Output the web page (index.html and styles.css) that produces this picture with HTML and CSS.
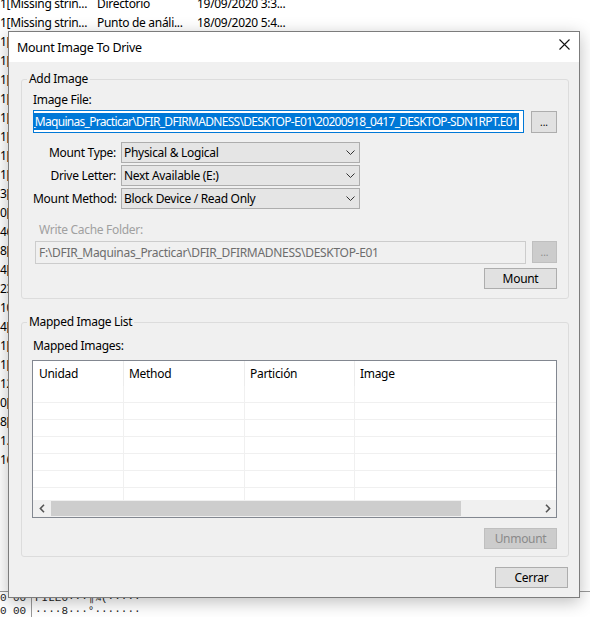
FILE: index.html
```html
<!DOCTYPE html>
<html lang="es">
<head>
<meta charset="utf-8">
<title>Mount Image To Drive</title>
<link rel="stylesheet" href="styles.css">
</head>
<body>
<div class="desk">
  <div class="list">
    <div class="row"><span class="c1">1[Missing strin...</span><span class="c2">Directorio</span><span class="c3">19/09/2020 3:3...</span></div>
    <div class="row"><span class="c1">1[Missing strin...</span><span class="c2">Punto de análi...</span><span class="c3">18/09/2020 5:4...</span></div>
    <div class="row"><span class="c1">1[</span></div>
    <div class="row"><span class="c1">1[</span></div>
    <div class="row"><span class="c1">1[</span></div>
    <div class="row"><span class="c1">1[</span></div>
    <div class="row"><span class="c1">1[</span></div>
    <div class="row"><span class="c1">1[</span></div>
    <div class="row"><span class="c1">1[</span></div>
    <div class="row"><span class="c1">1[</span></div>
    <div class="row"><span class="c1">3[</span></div>
    <div class="row"><span class="c1">0[</span></div>
    <div class="row"><span class="c1">46</span></div>
    <div class="row"><span class="c1">8[</span></div>
    <div class="row"><span class="c1">4[</span></div>
    <div class="row"><span class="c1">23</span></div>
    <div class="row"><span class="c1">10</span></div>
    <div class="row"><span class="c1">4[</span></div>
    <div class="row"><span class="c1">1[</span></div>
    <div class="row"><span class="c1">1[</span></div>
    <div class="row"><span class="c1">12</span></div>
    <div class="row"><span class="c1">0[</span></div>
    <div class="row"><span class="c1">8[</span></div>
    <div class="row"><span class="c1">1.</span></div>
    <div class="row"><span class="c1">16</span></div>
  </div>
  <div class="hex">
    <div class="hexrow"><span class="off">0</span><span class="hb">00</span><span class="asc">FILE0···¶¾(·····</span></div>
    <div class="hexrow"><span class="off">0</span><span class="hb">00</span><span class="asc">····8···°·······</span></div>
  </div>
</div>

<div class="dialog">
  <div class="titlebar">
    <span class="title">Mount Image To Drive</span>
    <svg class="close" width="11" height="11" viewBox="0 0 11 11"><path d="M0.5 0.5L10.5 10.5M10.5 0.5L0.5 10.5" stroke="#111" stroke-width="1.1" fill="none"/></svg>
  </div>
  <div class="dbody">
    <fieldset class="group g1">
      <legend>Add Image</legend>
      <div class="lbl">Image File:</div>
      <div class="filerow">
        <div class="textbox focus"><span class="sel">_Maquinas_Practicar\DFIR_DFIRMADNESS\DESKTOP-E01\20200918_0417_DESKTOP-SDN1RPT.E01</span></div>
        <button class="btn dots">...</button>
      </div>
      <div class="opts">
        <span class="olbl">Mount Type:</span>
        <div class="combo"><span>Physical &amp; Logical</span><svg width="9" height="5" viewBox="0 0 9 5"><path d="M0.5 0.5L4.5 4.5L8.5 0.5" stroke="#333" fill="none"/></svg></div>
        <span class="olbl">Drive Letter:</span>
        <div class="combo"><span>Next Available (E:)</span><svg width="9" height="5" viewBox="0 0 9 5"><path d="M0.5 0.5L4.5 4.5L8.5 0.5" stroke="#333" fill="none"/></svg></div>
        <span class="olbl">Mount Method:</span>
        <div class="combo"><span>Block Device / Read Only</span><svg width="9" height="5" viewBox="0 0 9 5"><path d="M0.5 0.5L4.5 4.5L8.5 0.5" stroke="#333" fill="none"/></svg></div>
      </div>
      <div class="lbl dis-lbl">Write Cache Folder:</div>
      <div class="filerow dis-row">
        <div class="textbox disabled">F:\DFIR_Maquinas_Practicar\DFIR_DFIRMADNESS\DESKTOP-E01</div>
        <button class="btn dots off-btn">...</button>
      </div>
      <div class="actions a1"><button class="btn">Mount</button></div>
    </fieldset>

    <fieldset class="group g2">
      <legend>Mapped Image List</legend>
      <div class="lbl">Mapped Images:</div>
      <div class="lv">
        <div class="lv-head">
          <div class="col w1">Unidad</div>
          <div class="col w2">Method</div>
          <div class="col w3">Partición</div>
          <div class="col w4">Image</div>
        </div>
        <div class="lv-body">
          <div class="lv-row"><div class="cell w1"></div><div class="cell w2"></div><div class="cell w3"></div><div class="cell w4"></div></div>
          <div class="lv-row"><div class="cell w1"></div><div class="cell w2"></div><div class="cell w3"></div><div class="cell w4"></div></div>
          <div class="lv-row"><div class="cell w1"></div><div class="cell w2"></div><div class="cell w3"></div><div class="cell w4"></div></div>
          <div class="lv-row"><div class="cell w1"></div><div class="cell w2"></div><div class="cell w3"></div><div class="cell w4"></div></div>
          <div class="lv-row"><div class="cell w1"></div><div class="cell w2"></div><div class="cell w3"></div><div class="cell w4"></div></div>
          <div class="lv-row"><div class="cell w1"></div><div class="cell w2"></div><div class="cell w3"></div><div class="cell w4"></div></div>
          <div class="lv-row"><div class="cell w1"></div><div class="cell w2"></div><div class="cell w3"></div><div class="cell w4"></div></div>
        </div>
        <div class="hscroll">
          <span class="arrow"><svg width="6" height="9" viewBox="0 0 6 9"><path d="M5 0.8L1.4 4.5L5 8.2" stroke="#555" stroke-width="1.6" fill="none"/></svg></span>
          <div class="thumb"></div>
          <span class="arrow right"><svg width="6" height="9" viewBox="0 0 6 9"><path d="M1 0.8L4.6 4.5L1 8.2" stroke="#555" stroke-width="1.6" fill="none"/></svg></span>
        </div>
      </div>
      <div class="actions a2"><button class="btn off-btn">Unmount</button></div>
    </fieldset>

    <div class="footer"><button class="btn">Cerrar</button></div>
  </div>
</div>
</body>
</html>
```

FILE: styles.css
```css
* { box-sizing: border-box; }
html, body { margin: 0; padding: 0; }
body {
  width: 590px;
  height: 617px;
  overflow: hidden;
  position: relative;
  background: #ffffff;
  font-family: "Noto Sans", "Segoe UI", sans-serif;
  font-size: 12px;
  letter-spacing: -0.3px;
  color: #000;
}

/* background application */
.desk { height: 617px; display: flex; flex-direction: column; }
.list { margin-top: -6px; }
.row { height: 19px; line-height: 19px; display: flex; white-space: nowrap; }
.c1 { width: 97px; overflow: hidden; }
.c2 { width: 100px; overflow: hidden; }
.c3 { width: 120px; overflow: hidden; }

.hex {
  margin-top: auto;
  margin-bottom: -1px;
  border-top: 1px solid #9a9a9a;
  font-family: "Liberation Mono", monospace;
  font-size: 11px;
  letter-spacing: 0;
  color: #222;
}
.hexrow { height: 13px; line-height: 13px; display: flex; white-space: nowrap; }
.off { width: 13px; }
.hb { width: 19px; border-right: 1px solid #9a9a9a; }
.asc { padding-left: 3px; }

/* dialog */
.dialog {
  position: absolute;
  left: 8px;
  top: 31px;
  width: 572px;
  height: 567px;
  border: 1px solid #7c7c7c;
  background: #f0f0f0;
  box-shadow: 0 4px 16px rgba(0, 0, 0, 0.26);
  display: flex;
  flex-direction: column;
}
.titlebar {
  height: 30px;
  flex-shrink: 0;
  background: #fff;
  display: flex;
  align-items: center;
  padding-left: 8px;
}
.title { font-size: 12.5px; }
.close { margin-left: auto; margin-right: 9px; align-self: flex-start; margin-top: 7px; }

.dbody {
  flex: 1;
  padding: 9px 10px 0 12px;
  display: flex;
  flex-direction: column;
}

.group {
  margin: 0;
  min-width: 0;
  border: 1px solid #dcdcdc;
  border-radius: 3px;
}
.group legend {
  padding: 0 2px;
  margin-left: -6px;
  height: 16px;
  line-height: 16px;
}
.g1 { padding: 5px 11px 9px; }
.g2 { padding: 8px 11px 7px; margin-top: 15px; }

.lbl { height: 16px; line-height: 16px; white-space: nowrap; }

.filerow { display: flex; align-items: flex-start; margin-top: 2px; }
.textbox {
  width: 491px;
  height: 23px;
  overflow: hidden;
  display: flex;
  align-items: center;
  white-space: nowrap;
}
.textbox.focus {
  border: 1px solid #0078d7;
  background: #fff;
  justify-content: flex-end;
  padding-right: 4px;
}
.sel {
  flex-shrink: 0;
  background: #0078d7;
  color: #fff;
  line-height: 17px;
  padding: 0 1px;
  letter-spacing: -0.7px;
}

.btn {
  font: inherit;
  font-size: 12px;
  letter-spacing: -0.3px;
  color: #000;
  background: #e1e1e1;
  border: 1px solid #adadad;
  padding: 0;
  margin: 0;
  width: 73px;
  height: 21px;
  line-height: 19px;
}
.btn.dots { width: 26px; height: 22px; margin-left: 7px; margin-top: 1px; font-size: 10px; letter-spacing: 0; }
.btn.off-btn { background: #cccccc; border-color: #bfbfbf; color: #8a8a8a; }

.opts {
  display: grid;
  grid-template-columns: 83px 239px;
  column-gap: 5px;
  row-gap: 2px;
  margin-top: 9px;
}
.olbl { text-align: right; line-height: 21px; white-space: nowrap; }
.combo {
  height: 21px;
  border: 1px solid #adadad;
  background: #e5e5e5;
  display: flex;
  align-items: center;
  padding: 0 4px 0 2px;
  white-space: nowrap;
}
.combo svg { margin-left: auto; flex-shrink: 0; }

.dis-lbl { margin-top: 13px; padding-left: 6px; color: #a0a0a0; }
.dis-row { margin-top: 3px; }
.textbox.disabled {
  margin-left: 2px;
  border: 1px solid #cccccc;
  background: #f0f0f0;
  color: #6d6d6d;
  padding-left: 3px;
}
.dis-row .btn.dots { margin-left: 6px; width: 25px; margin-top: 0; }

.actions { display: flex; justify-content: flex-end; }
.a1 { margin-top: 4px; }
.a2 { margin-top: 10px; }

/* list view */
.lv {
  margin-top: 6px;
  margin-left: -1px;
  width: 525px;
  height: 158px;
  border: 1px solid #828790;
  background: #fff;
  display: flex;
  flex-direction: column;
  overflow: hidden;
}
.lv-head { height: 25px; display: flex; flex-shrink: 0; }
.col {
  flex-shrink: 0;
  line-height: 25px;
  padding-left: 5px;
  border-right: 1px solid #ececec;
  white-space: nowrap;
}
.col.w1 { padding-left: 6px; }
.w1 { width: 91px; }
.w2 { width: 121px; }
.w3 { width: 110px; }
.w4 { width: 300px; }
.lv-body { height: 114px; flex-shrink: 0; overflow: hidden; }
.lv-row { display: flex; height: 17px; }
.cell { flex-shrink: 0; height: 17px; border-right: 1px solid #f0f0f0; border-bottom: 1px solid #f0f0f0; }

.hscroll {
  height: 17px;
  flex-shrink: 0;
  background: #f0f0f0;
  display: flex;
  align-items: center;
}
.arrow { width: 17px; height: 17px; display: flex; align-items: center; justify-content: center; flex-shrink: 0; }
.thumb { width: 410px; height: 15px; margin-left: 1px; background: #cdcdcd; }
.arrow.right { margin-left: auto; }

.footer { margin-top: 10px; display: flex; justify-content: flex-end; padding-right: 1px; }
```
